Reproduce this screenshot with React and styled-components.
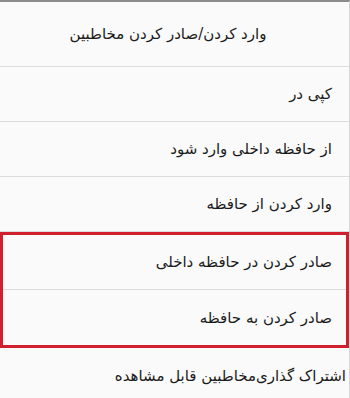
import React from "react";
import styled, { createGlobalStyle } from "styled-components";

const Global = createGlobalStyle`
  html, body { margin: 0; padding: 0; background: #fafafa; }
  body { font-family: "DejaVu Sans", "Noto Sans", sans-serif; }
`;

const Sheet = styled.div`
  width: 350px;
  height: 398px;
  box-sizing: border-box;
  background: #fafafa;
  border-top: 2px solid #8c8c8c;
  border-right: 1px solid #d6d6d6;
  display: flex;
  flex-direction: column;
  overflow: hidden;
  direction: rtl;
`;

const Title = styled.div`
  height: 65px;
  flex: none;
  display: flex;
  align-items: center;
  justify-content: center;
  padding-right: 13px;
  font-size: 15px;
  color: #1a1a1a;
  border-bottom: 1px solid #dcdcdc;
  box-sizing: border-box;
`;

const Item = styled.div`
  height: 55px;
  flex: none;
  box-sizing: border-box;
  display: flex;
  align-items: center;
  padding-right: ${(p) => (p.$edge ? "3px" : p.$inset ? "14px" : "17px")};
  font-size: 15px;
  color: #1a1a1a;
  white-space: nowrap;
  border-bottom: ${(p) => (p.$last ? "none" : "1px solid #dcdcdc")};
`;

const Highlight = styled.div`
  flex: none;
  border: 3px solid #d01f2d;
  box-sizing: border-box;
  display: flex;
  flex-direction: column;
`;

export default function App() {
  return (
    <>
      <Global />
      <Sheet>
        <Title>وارد کردن/صادر کردن مخاطبین</Title>
        <Item>کپی در</Item>
        <Item>از حافظه داخلی وارد شود</Item>
        <Item>وارد کردن از حافظه</Item>
        <Highlight>
          <Item $inset>صادر کردن در حافظه داخلی</Item>
          <Item $inset $last>صادر کردن به حافظه</Item>
        </Highlight>
        <Item $edge $last>اشتراک گذاری‌مخاطبین قابل مشاهده</Item>
      </Sheet>
    </>
  );
}
